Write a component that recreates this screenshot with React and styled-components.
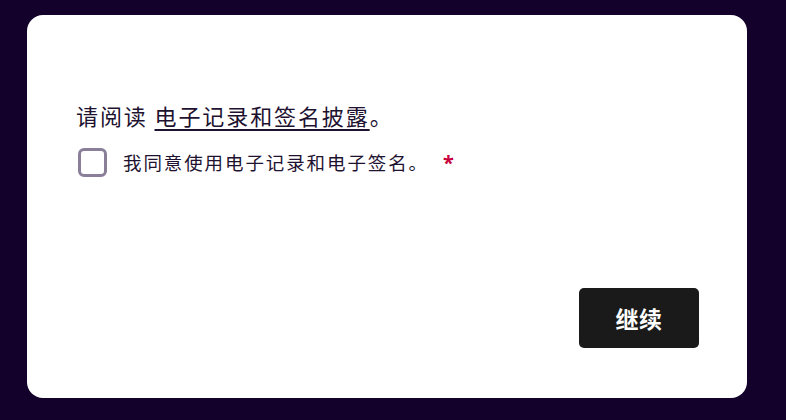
import React, { useState } from "react";
import styled, { createGlobalStyle } from "styled-components";

const GlobalStyle = createGlobalStyle`
  html, body {
    margin: 0;
    padding: 0;
    background: #13002b;
  }
  body {
    font-family: "Noto Sans", "Noto Sans CJK SC", sans-serif;
  }
`;

const Page = styled.div`
  width: 786px;
  height: 420px;
  padding: 15px 39px 22px 27px;
  box-sizing: border-box;
`;

const Card = styled.div`
  background: #fff;
  border-radius: 16px;
  height: 100%;
  box-sizing: border-box;
  padding: 84px 48px 50px 49px;
  display: flex;
  flex-direction: column;
`;

const Intro = styled.p`
  margin: 0;
  font-family: "Noto Sans CJK SC", sans-serif;
  font-size: 22px;
  letter-spacing: 1.9px;
  line-height: 32px;
  color: #1e1230;
`;

const DocLink = styled.a`
  color: #1e1230;
  text-decoration: underline;
  text-decoration-thickness: 2px;
  text-underline-offset: 4px;
  cursor: pointer;
`;

const ConsentRow = styled.label`
  display: flex;
  align-items: center;
  gap: 16px;
  margin-top: 17px;
  padding-left: 2px;
  cursor: pointer;
`;

const Box = styled.span`
  width: 29px;
  height: 29px;
  box-sizing: border-box;
  border: 3px solid #8a7f99;
  border-radius: 6px;
  background: ${(p) => (p.checked ? "#1e1230" : "#fff")};
  flex-shrink: 0;
`;

const LabelText = styled.span`
  font-family: "Noto Sans CJK SC", sans-serif;
  font-size: 18.5px;
  letter-spacing: 1.9px;
  color: #1e1230;
`;

const Required = styled.span`
  color: #c8003c;
  font-family: "Noto Sans", sans-serif;
  font-size: 20px;
  font-weight: 700;
  margin-left: 14px;
`;

const Footer = styled.div`
  margin-top: auto;
  display: flex;
  justify-content: flex-end;
`;

const ContinueButton = styled.button`
  width: 120px;
  height: 60px;
  padding: 0;
  border: none;
  border-radius: 5px;
  background: #1a1a1a;
  color: #fff;
  font-family: "Noto Sans CJK SC", sans-serif;
  font-size: 23px;
  letter-spacing: 0.5px;
  font-weight: 700;
  cursor: pointer;
`;

export default function App() {
  const [agreed, setAgreed] = useState(false);

  return (
    <>
      <GlobalStyle />
      <Page>
        <Card>
          <Intro>
            请阅读 <DocLink>电子记录和签名披露</DocLink>。
          </Intro>
          <ConsentRow onClick={() => setAgreed(!agreed)}>
            <Box checked={agreed} />
            <LabelText>
              我同意使用电子记录和电子签名。
              <Required>*</Required>
            </LabelText>
          </ConsentRow>
          <Footer>
            <ContinueButton type="button">继续</ContinueButton>
          </Footer>
        </Card>
      </Page>
    </>
  );
}
